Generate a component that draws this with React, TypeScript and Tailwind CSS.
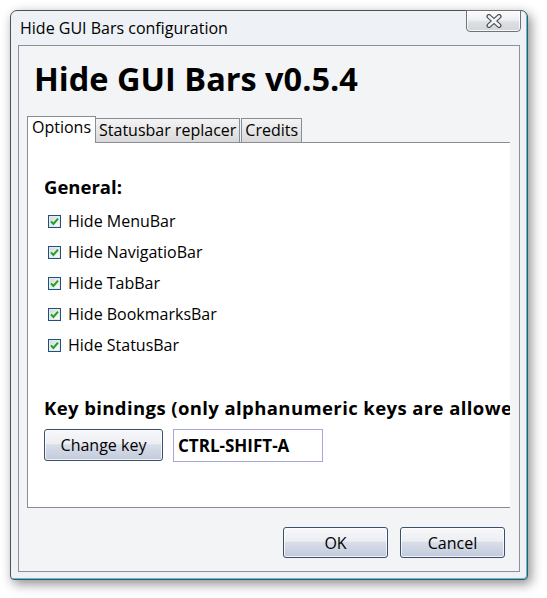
const options = ['Hide MenuBar', 'Hide NavigatioBar', 'Hide TabBar', 'Hide BookmarksBar', 'Hide StatusBar']

const vistaButton =
  'flex items-center justify-center rounded-[3px] border border-[#3d4f6e] bg-[linear-gradient(to_bottom,#f7f8fa_0%,#eceef2_45%,#d8dee9_50%,#c2cadb_100%)] shadow-[inset_0_0_0_1px_rgba(255,255,255,0.75)] text-[16px] leading-[20px] text-black'

function CheckBox() {
  return (
    <span className="flex h-[13px] w-[13px] shrink-0 items-center justify-center border border-[#1c5180] bg-[linear-gradient(135deg,#d4d6d9,#ffffff)] shadow-[inset_0_0_0_1px_#e8e9eb]">
      <svg width="9" height="9" viewBox="0 0 9 9" aria-hidden="true">
        <path d="M1 4.4 L3.4 6.9 L8 1.6" stroke="#1fa31f" strokeWidth="2" fill="none" />
      </svg>
    </span>
  )
}

function CloseButton() {
  return (
    <div className="absolute right-[6px] top-[-1px] flex h-[22px] w-[55px] items-center justify-center rounded-b-[4px] border border-[#6f7378] bg-[linear-gradient(to_bottom,#fbfbfc_0%,#eef0f2_45%,#dcdfe3_55%,#d3d6db_100%)] shadow-[inset_0_0_0_1px_rgba(255,255,255,0.8)]">
      <svg width="18" height="14" viewBox="0 0 18 14" aria-hidden="true">
        <path d="M4 2.5 L14 11.5 M14 2.5 L4 11.5" stroke="#4b4f55" strokeWidth="5" strokeLinecap="round" fill="none" />
        <path d="M4 2.5 L14 11.5 M14 2.5 L4 11.5" stroke="#f4f5f7" strokeWidth="2.6" strokeLinecap="round" fill="none" />
      </svg>
    </div>
  )
}

export default function App() {
  return (
    <div className="h-[598px] w-[547px] bg-white pl-[10px] pt-[10px] font-['Open_Sans',sans-serif] text-black">
      <div className="relative flex h-[570px] w-[518px] flex-col rounded-t-[7px] rounded-b-[4px] border border-[#4e5257] bg-[#eef1f5] px-[7px] pb-[7px] shadow-[inset_-1px_-1px_0_#4cc5e2,3px_4px_12px_rgba(0,0,0,0.45)]">
        {/* title bar */}
        <div className="flex h-[34px] shrink-0 items-center pl-[2px] text-[16px] leading-[22px]">
          Hide GUI Bars configuration
        </div>
        <CloseButton />

        {/* client area */}
        <div className="flex flex-1 flex-col border border-[#8d9096] bg-[#f3f4f6]">
          <h1 className="mt-[16px] pl-[15px] text-[32.5px] font-bold leading-[33px]">Hide GUI Bars v0.5.4</h1>

          <div className="ml-[8px] mt-[21px] flex items-end text-[16px]">
            <div className="relative z-10 -mb-px h-[27px] border-x border-t border-[#898c95] bg-white px-[4px] leading-[20px]">
              Options
            </div>
            <div className="h-[24px] border-r border-t border-[#898c95] bg-[linear-gradient(to_bottom,#f4f4f4,#d9d9d9)] px-[3px] leading-[22px]">
              Statusbar replacer
            </div>
            <div className="ml-px h-[24px] border-x border-t border-[#898c95] bg-[linear-gradient(to_bottom,#f4f4f4,#d9d9d9)] px-[3px] leading-[22px]">
              Credits
            </div>
          </div>

          {/* tab panel */}
          <div className="ml-[8px] h-[366px] w-[483px] overflow-hidden border-y border-l border-[#898c95] bg-white pl-[16px] pt-[33px]">
            <div className="text-[18.5px] font-bold leading-[22px]">General:</div>
            <div className="mt-[8px] flex flex-col">
              {options.map((o) => (
                <label key={o} className="flex h-[31px] items-center gap-[7px] pl-[4px]">
                  <CheckBox />
                  <span className="text-[16px] leading-[31px]">{o}</span>
                </label>
              ))}
            </div>
            <div className="mt-[36px] whitespace-nowrap text-[18.5px] font-bold leading-[22px] tracking-[0.4px]">
              Key bindings (only alphanumeric keys are allowed)
            </div>
            <div className="mt-[10px] flex items-start">
              <button className={`${vistaButton} h-[32px] w-[119px]`}>Change key</button>
              <div className="ml-[10px] flex h-[33px] w-[150px] items-center border border-[#a4a7d8] bg-white pl-[4px] text-[17px] font-bold leading-[20px]">
                CTRL-SHIFT-A
              </div>
            </div>
          </div>

          <div className="mt-[19px] flex justify-end gap-[12px] pr-[14px]">
            <button className={`${vistaButton} h-[31px] w-[105px]`}>OK</button>
            <button className={`${vistaButton} h-[31px] w-[105px]`}>Cancel</button>
          </div>
        </div>
      </div>
    </div>
  )
}
